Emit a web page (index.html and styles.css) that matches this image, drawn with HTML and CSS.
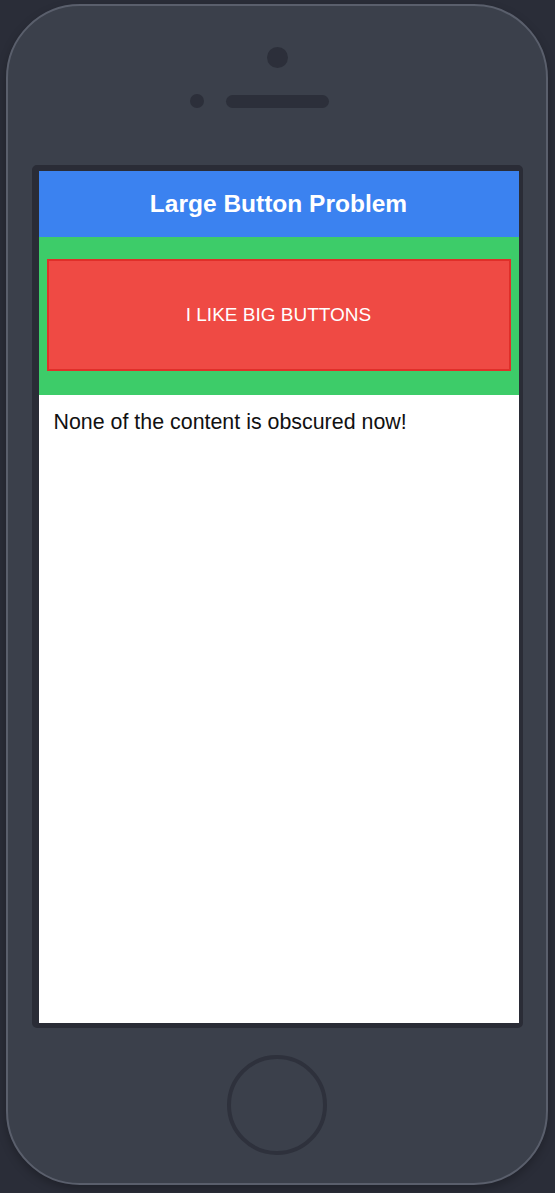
FILE: index.html
```html
<!DOCTYPE html>
<html>
<head>
<meta charset="utf-8">
<link rel="stylesheet" href="styles.css">
</head>
<body>
<div class="phone">
  <div class="camera"></div>
  <div class="speaker-row">
    <div class="sensor"></div>
    <div class="speaker"></div>
  </div>
  <div class="bezel">
    <div class="screen">
      <header class="bar">Large Button Problem</header>
      <div class="button-area">
        <button class="big-button">I LIKE BIG BUTTONS</button>
      </div>
      <p class="content">None of the content is obscured now!</p>
    </div>
  </div>
  <div class="home"></div>
</div>
</body>
</html>
```
FILE: styles.css
```css
html, body {
  margin: 0;
  padding: 0;
  background: #2a2d38;
  width: 555px;
  height: 1193px;
  overflow: hidden;
}
.phone {
  box-sizing: border-box;
  margin: 4px 0 0 6px;
  width: 542px;
  height: 1181px;
  border: 2px solid #5a5f6c;
  border-radius: 74px;
  background: #3b404b;
  display: flex;
  flex-direction: column;
  align-items: center;
  box-shadow: 0 4px 10px rgba(0,0,0,0.25);
}
.camera {
  margin-top: 41px;
  width: 21px;
  height: 21px;
  border-radius: 50%;
  background: #2c2f3a;
}
.speaker-row {
  margin-top: 26px;
  display: flex;
  align-items: center;
  gap: 22px;
  padding-right: 35px;
}
.sensor {
  width: 14px;
  height: 14px;
  border-radius: 50%;
  background: #2c2f3a;
}
.speaker {
  width: 103px;
  height: 13px;
  border-radius: 7px;
  background: #2c2f3a;
}
.bezel {
  margin-top: 57px;
  border-style: solid;
  border-color: #2a2c36;
  border-width: 6px 4px 5px 7px;
  border-radius: 5px;
}
.screen {
  width: 480px;
  height: 852px;
  background: #ffffff;
  display: flex;
  flex-direction: column;
  font-family: "Liberation Sans", Arial, sans-serif;
}
.bar {
  height: 66px;
  background: #3b82f0;
  color: #ffffff;
  font-size: 24.5px;
  font-weight: bold;
  display: flex;
  align-items: center;
  justify-content: center;
}
.button-area {
  background: #3dcc69;
  padding: 22px 8px 24px;
}
.big-button {
  display: block;
  width: 100%;
  height: 112px;
  box-sizing: border-box;
  background: #ef4a44;
  border: 2px solid #e02f2a;
  color: #ffffff;
  font-family: "Liberation Sans", Arial, sans-serif;
  font-size: 19px;
  padding: 0;
  margin: 0;
}
.content {
  margin: 0;
  padding: 15px 15px;
  font-size: 21.4px;
  color: #111111;
}
.home {
  margin-top: 27px;
  width: 100px;
  height: 100px;
  box-sizing: border-box;
  border: 4px solid #2e313c;
  border-radius: 50%;
}
```
